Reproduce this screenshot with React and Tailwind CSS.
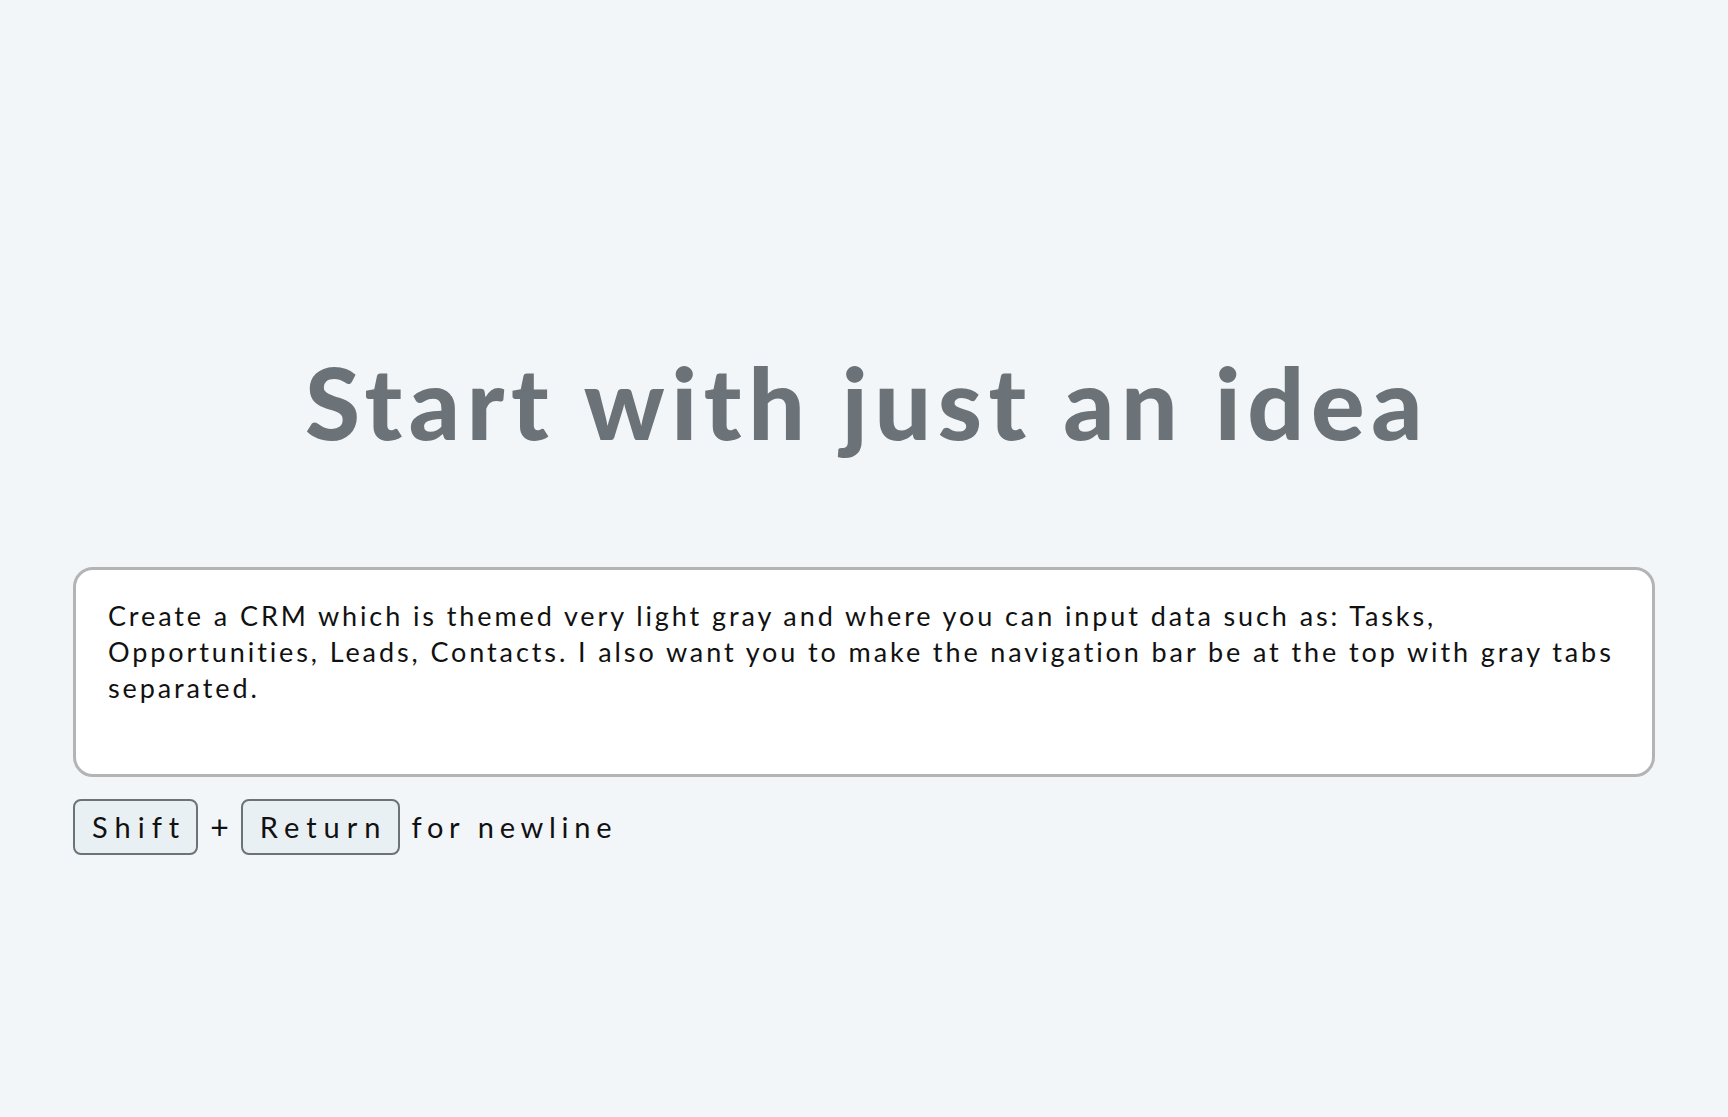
import React, { useState } from 'react';

const font = { fontFamily: 'Lato, "Noto Sans", sans-serif' };

function Key({ children }){
  return (
    <span className="inline-flex items-center h-[56px] pl-[17px] pr-[10px] rounded-[8px] border-2 border-[#6b7378] bg-[#e9f0f3] text-[29px] tracking-[7px] text-[#111]">
      {children}
    </span>
  );
}

export default function App(){
  const [text, setText] = useState('Create a CRM which is themed very light gray and where you can input data such as: Tasks,\nOpportunities, Leads, Contacts. I also want you to make the navigation bar be at the top with gray tabs\nseparated.');
  return (
    <div className="min-h-screen bg-[#f3f6f9] pt-[351px] px-[73px]" style={font}>
      <h1 className="text-center pl-[6px] text-[100px] leading-none tracking-[6.6px] font-black text-[#6b7378]">Start with just an idea</h1>
      <div className="mt-[116px]">
        <textarea
          className="block w-full h-[210px] resize-none rounded-[20px] border-[3px] border-[#b4b4b4] bg-white pt-[28px] pl-[32px] pr-[16px] text-[27px] leading-[36px] tracking-[2.9px] text-[#111] outline-none"
          value={text}
          onChange={e=>setText(e.target.value)}
          style={font}
        />
      </div>
      <div className="mt-[22px] flex items-center gap-[12px] text-[29px] text-[#111]">
        <Key>Shift</Key>
        <span className="text-[32px]">+</span>
        <Key>Return</Key>
        <span className="tracking-[5.7px]">for newline</span>
      </div>
    </div>
  );
}
